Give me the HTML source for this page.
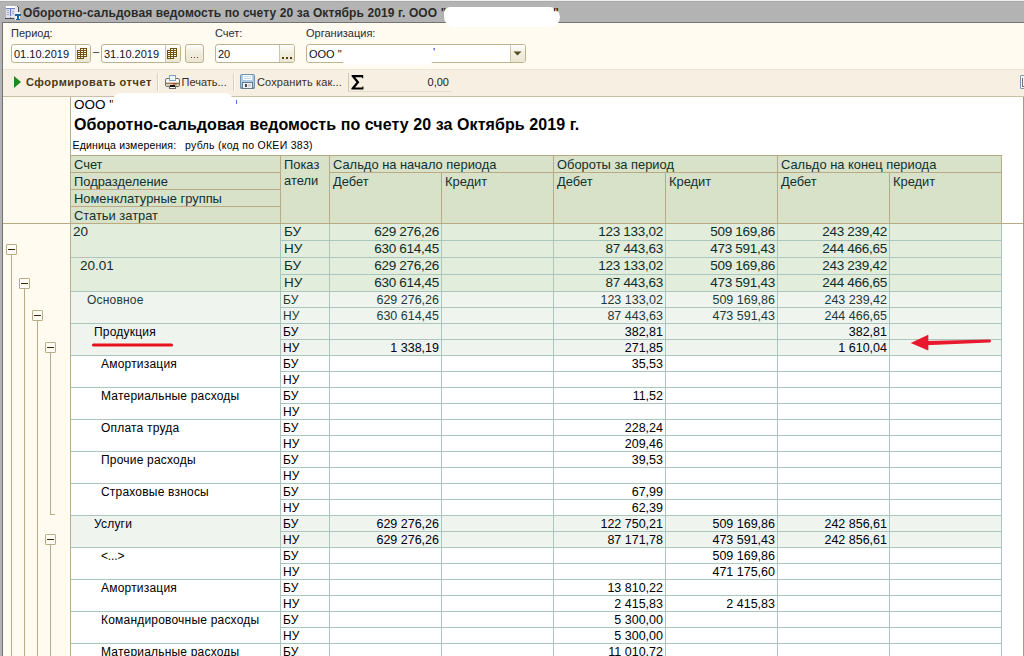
<!DOCTYPE html>
<html><head><meta charset="utf-8"><style>
html,body{margin:0;padding:0;width:1024px;height:656px;overflow:hidden;background:#fff}
body{position:relative;font-family:Liberation Sans,sans-serif}
div{position:absolute;box-sizing:content-box}
.t{white-space:pre}
</style></head><body>
<div style="left:0px;top:0px;width:1024px;height:656px;background:#b3b3b3"></div>
<div style="left:0px;top:0px;width:1024px;height:1px;background:#f0f0f0"></div>
<div style="left:0px;top:1px;width:1024px;height:1px;background:#a9a9a9"></div>
<div style="left:2px;top:22px;width:1022px;height:634px;background:#747474"></div>
<div style="left:3px;top:23px;width:1021px;height:633px;background:#fffbf0"></div>
<svg style="position:absolute;left:0;top:0" width="24" height="22" viewBox="0 0 24 22" shape-rendering="crispEdges">
<rect x="6" y="6" width="9" height="12" fill="#d9ddea"/>
<rect x="6" y="6" width="9" height="2" fill="#ffffff"/>
<rect x="6" y="8" width="9" height="1" fill="#6d80c4"/>
<rect x="10" y="8" width="1" height="10" fill="#6d80c4"/>
<rect x="7" y="10" width="2" height="1" fill="#a9b0c4"/>
<rect x="7" y="12" width="2" height="1" fill="#a9b0c4"/>
<rect x="7" y="14" width="2" height="1" fill="#a9b0c4"/>
<rect x="12" y="11" width="2" height="1" fill="#a9b0c4"/>
<rect x="12" y="13" width="2" height="1" fill="#a9b0c4"/>
<rect x="6" y="16" width="9" height="1" fill="#e6e8f0"/>
<rect x="5" y="18" width="9" height="1" fill="#4a4a4a"/>
<rect x="15" y="6" width="3" height="6" fill="#e8e8ee"/>
<rect x="18" y="7" width="1" height="5" fill="#505050"/>
<rect x="17" y="6" width="1" height="1" fill="#606060"/>
<rect x="15" y="12" width="5" height="8" fill="#f4f4f6"/>
<rect x="15" y="14" width="6" height="2" fill="#1a64a0"/>
<rect x="17" y="15" width="2" height="5" fill="#1a64a0"/>
<rect x="16" y="19" width="4" height="1" fill="#1a64a0"/>
</svg>
<div class="t" style="left:23px;top:5px;text-align:left;font:bold 12px/16px Liberation Sans,sans-serif;color:#2a2a2a;letter-spacing:0.115px">Оборотно-сальдовая ведомость по счету 20 за Октябрь 2019 г. ООО "</div>
<div style="left:444px;top:7px;width:116px;height:20px;background:#fff;border-radius:6px 10px 10px 10px"></div>
<div class="t" style="left:553px;top:5px;text-align:left;font:bold 12px/16px Liberation Sans,sans-serif;color:#2a2a2a">"</div>
<div class="t" style="left:11px;top:27px;text-align:left;font:11px/13px Liberation Sans,sans-serif;color:#2a2a38">Период:</div>
<div class="t" style="left:215px;top:27px;text-align:left;font:11px/13px Liberation Sans,sans-serif;color:#2a2a38">Счет:</div>
<div class="t" style="left:306px;top:27px;text-align:left;font:11px/13px Liberation Sans,sans-serif;color:#2a2a38">Организация:</div>
<div style="left:11px;top:44px;width:78px;height:17px;border:1px solid #bdb38f;border-radius:3px;background:#fff;overflow:hidden"><div class="t" style="left:2px;top:2.5px;font:11px/13px Liberation Sans,sans-serif;color:#101020">01.10.2019</div>
<div style="left:63px;top:0;width:15px;height:17px;border-left:1px solid #cfc6a6;background:linear-gradient(#ffffff,#f3f0e2 40%,#ebe6d2)"></div>
<svg style="position:absolute;left:65px;top:3px" width="11" height="11" viewBox="0 0 11 11" shape-rendering="crispEdges"><path d="M3 0 H10 V9 H7 V11 H0 V2 H3 Z" fill="#6e5012"/><g fill="#fffbea"><rect x="4" y="1" width="2" height="1"/><rect x="7" y="1" width="2" height="1"/><rect x="1" y="3" width="2" height="1"/><rect x="4" y="3" width="2" height="1"/><rect x="7" y="3" width="2" height="1"/><rect x="1" y="5" width="2" height="1"/><rect x="4" y="5" width="2" height="1"/><rect x="7" y="5" width="2" height="1"/><rect x="1" y="7" width="2" height="1"/><rect x="4" y="7" width="2" height="1"/><rect x="7" y="7" width="2" height="1"/><rect x="1" y="9" width="2" height="1"/><rect x="4" y="9" width="2" height="1"/></g></svg>
</div>
<div class="t" style="left:93px;top:45px;text-align:left;font:11px/13px Liberation Sans,sans-serif;color:#222">–</div>
<div style="left:101px;top:44px;width:78px;height:17px;border:1px solid #bdb38f;border-radius:3px;background:#fff;overflow:hidden"><div class="t" style="left:2px;top:2.5px;font:11px/13px Liberation Sans,sans-serif;color:#101020">31.10.2019</div>
<div style="left:63px;top:0;width:15px;height:17px;border-left:1px solid #cfc6a6;background:linear-gradient(#ffffff,#f3f0e2 40%,#ebe6d2)"></div>
<svg style="position:absolute;left:65px;top:3px" width="11" height="11" viewBox="0 0 11 11" shape-rendering="crispEdges"><path d="M3 0 H10 V9 H7 V11 H0 V2 H3 Z" fill="#6e5012"/><g fill="#fffbea"><rect x="4" y="1" width="2" height="1"/><rect x="7" y="1" width="2" height="1"/><rect x="1" y="3" width="2" height="1"/><rect x="4" y="3" width="2" height="1"/><rect x="7" y="3" width="2" height="1"/><rect x="1" y="5" width="2" height="1"/><rect x="4" y="5" width="2" height="1"/><rect x="7" y="5" width="2" height="1"/><rect x="1" y="7" width="2" height="1"/><rect x="4" y="7" width="2" height="1"/><rect x="7" y="7" width="2" height="1"/><rect x="1" y="9" width="2" height="1"/><rect x="4" y="9" width="2" height="1"/></g></svg>
</div>
<div style="left:185px;top:44px;width:17px;height:17px;border:1px solid #bdb38f;border-radius:3px;background:linear-gradient(#ffffff,#f3f0e2 35%,#ebe6d2)"><div style="left:5px;top:12px;width:1px;height:1px;background:#7a2840"></div><div style="left:8px;top:12px;width:1px;height:1px;background:#7a2840"></div><div style="left:11px;top:12px;width:1px;height:1px;background:#7a2840"></div></div>
<div style="left:215px;top:44px;width:78px;height:17px;border:1px solid #bdb38f;border-radius:3px;background:#fff;overflow:hidden"><div class="t" style="left:2px;top:2.5px;font:11px/13px Liberation Sans,sans-serif;color:#101020">20</div>
<div style="left:63px;top:0;width:15px;height:17px;border-left:1px solid #cfc6a6;background:linear-gradient(#ffffff,#f3f0e2 40%,#ebe6d2)"></div>
<div style="left:66px;top:12px;width:2px;height:2px;background:#5a3c08"></div>
<div style="left:70px;top:12px;width:2px;height:2px;background:#5a3c08"></div>
<div style="left:74px;top:12px;width:2px;height:2px;background:#5a3c08"></div>
</div>
<div style="left:306px;top:44px;width:218px;height:17px;border:1px solid #bdb38f;border-radius:3px;background:#fff;overflow:hidden"><div class="t" style="left:2px;top:2.5px;font:11px/13px Liberation Sans,sans-serif;color:#101020">ООО "</div>
<div style="left:203px;top:0;width:15px;height:17px;border-left:1px solid #cfc6a6;background:linear-gradient(#ffffff,#f3f0e2 40%,#ebe6d2)"></div>
<svg style="position:absolute;left:206px;top:6px" width="9" height="5" viewBox="0 0 9 5"><path d="M0.5 0.5 H8.5 L4.5 4.5 Z" fill="#5a4a20"/></svg>
</div>
<div class="t" style="left:433px;top:46px;text-align:left;font:11px/13px Liberation Sans,sans-serif;color:#302050">'</div>
<div style="left:341px;top:48px;width:93px;height:17px;background:#fff;border-radius:8px"></div>
<div style="left:3px;top:69px;width:1021px;height:27px;background:#f7efe2"></div>
<div style="left:3px;top:69px;width:1021px;height:1px;background:#ebe5d5"></div>
<div style="left:3px;top:96px;width:1021px;height:1px;background:#c9c0a6"></div>
<svg style="position:absolute;left:14px;top:76px" width="7" height="12" viewBox="0 0 7 12"><path d="M0 0 L7 6 L0 12 Z" fill="#1c8a1c"/></svg>
<div class="t" style="left:26px;top:74.5px;text-align:left;font:bold 11px/14px Liberation Sans,sans-serif;color:#4b3a12;letter-spacing:0.52px">Сформировать отчет</div>
<div style="left:157px;top:73px;width:1px;height:18px;background:#d9d1bb"></div>
<div style="left:158px;top:73px;width:1px;height:18px;background:#fffdf8"></div>
<svg style="position:absolute;left:164px;top:74px" width="17" height="16" viewBox="0 0 17 16">
<rect x="1.5" y="4.5" width="14" height="8" rx="1.5" fill="#fafafa" stroke="#6f6f6f"/>
<rect x="2" y="8" width="13" height="4" fill="#dcc8b4"/>
<rect x="2" y="9" width="13" height="1" fill="#a07a58"/>
<rect x="5.5" y="1.5" width="6" height="5" fill="#eef5fc" stroke="#7fa0c0"/>
<rect x="9" y="9" width="1.6" height="1.6" fill="#e02a1a"/>
<rect x="11" y="9" width="1.6" height="1.6" fill="#1a9a2a"/>
<rect x="5.5" y="12.5" width="6" height="2" fill="#fff" stroke="#666"/>
<rect x="6" y="11" width="5" height="2" fill="#111"/>
</svg>
<div class="t" style="left:181.5px;top:74.5px;text-align:left;font:11px/14px Liberation Sans,sans-serif;color:#3a3020">Печать...</div>
<div style="left:233px;top:73px;width:1px;height:18px;background:#d9d1bb"></div>
<div style="left:234px;top:73px;width:1px;height:18px;background:#fffdf8"></div>
<svg style="position:absolute;left:240px;top:74px" width="15" height="15" viewBox="0 0 15 15">
<rect x="0.5" y="0.5" width="14" height="14" rx="1.2" fill="#aecbe6" stroke="#7090ae"/>
<rect x="0.5" y="13.5" width="14" height="1" fill="#5f7386"/>
<rect x="3" y="1" width="9" height="5" fill="#fbfdff"/>
<rect x="4" y="2.2" width="7" height="0.9" fill="#b8d6e4"/>
<rect x="4" y="4" width="7" height="0.9" fill="#b8d6e4"/>
<rect x="2.5" y="8.5" width="10" height="6" fill="#eef0f2" stroke="#6a7c8c"/>
<rect x="5" y="10" width="2" height="3" fill="#3c5064"/>
<rect x="8" y="10" width="3" height="3" fill="#cfd4d8"/>
</svg>
<div class="t" style="left:257px;top:74.5px;text-align:left;font:11px/14px Liberation Sans,sans-serif;color:#3a3020;letter-spacing:0.13px">Сохранить как...</div>
<div style="left:348px;top:73px;width:104px;height:19px;border-left:1px solid #d2c9b3;border-bottom:1px solid #e2dccb;box-sizing:border-box;background:#f7efe2"></div>
<svg style="position:absolute;left:351px;top:75px" width="13" height="15" viewBox="0 0 13 15"><path d="M0.6 0 H12.2 V3.2 H11 V2.2 H4.2 L8.4 7.3 L4 12.6 H11.2 V11.4 H12.4 V14.4 H0.4 V13.2 L5.4 7.3 L0.6 1.3 Z" fill="#000"/></svg>
<div class="t" style="left:400px;top:75px;width:49px;text-align:right;font:11px/14px Liberation Sans,sans-serif;color:#1a1a1a">0,00</div>
<div style="left:3px;top:97px;width:1020px;height:559px;background:#fffbf0"></div>
<div style="left:70px;top:97px;width:1px;height:559px;background:#b7ad88"></div>
<div style="left:71px;top:97px;width:952px;height:559px;background:#fff"></div>
<div style="left:1023px;top:97px;width:1px;height:559px;background:#a39b7d"></div>
<div style="left:1020px;top:75px;width:6px;height:12px;border:1px solid #7d98ae;border-radius:1px;background:linear-gradient(90deg,#fff,#d8ecfa)"></div>
<div style="left:1022px;top:78px;width:1px;height:8px;background:#6e6e6e"></div>
<div style="left:1022px;top:86px;width:2px;height:1px;background:#6e6e6e"></div>
<div class="t" style="left:74px;top:97px;text-align:left;font:13.5px/16px Liberation Sans,sans-serif;color:#000">ООО "</div>
<div style="left:113px;top:93px;width:120px;height:24px;background:#fff;border-radius:8px"></div>
<div style="left:236px;top:100px;width:1px;height:4px;background:#4a7ad0"></div>
<div class="t" style="left:74px;top:115px;text-align:left;font:bold 16px/19px Liberation Sans,sans-serif;color:#000;letter-spacing:0.075px">Оборотно-сальдовая ведомость по счету 20 за Октябрь 2019 г.</div>
<div class="t" style="left:72.6px;top:139px;text-align:left;font:10.5px/13px Liberation Sans,sans-serif;color:#000;letter-spacing:0.14px">Единица измерения:</div>
<div class="t" style="left:185px;top:139px;text-align:left;font:10.5px/13px Liberation Sans,sans-serif;color:#000;letter-spacing:0.29px">рубль (код по ОКЕИ 383)</div>
<div style="left:71px;top:156px;width:930px;height:67px;background:#d8e2c9"></div>
<div style="left:70px;top:155px;width:932px;height:1px;background:#b9aa84"></div>
<div style="left:3px;top:223px;width:1020px;height:1px;background:#b9aa84"></div>
<div style="left:70px;top:172px;width:210px;height:1px;background:#b9aa84"></div>
<div style="left:70px;top:189px;width:210px;height:1px;background:#b9aa84"></div>
<div style="left:70px;top:206px;width:210px;height:1px;background:#b9aa84"></div>
<div style="left:329px;top:172px;width:672px;height:1px;background:#b9aa84"></div>
<div style="left:70px;top:155px;width:1px;height:68px;background:#b9aa84"></div>
<div style="left:280px;top:155px;width:1px;height:68px;background:#b9aa84"></div>
<div style="left:329px;top:155px;width:1px;height:68px;background:#b9aa84"></div>
<div style="left:553px;top:155px;width:1px;height:68px;background:#b9aa84"></div>
<div style="left:777px;top:155px;width:1px;height:68px;background:#b9aa84"></div>
<div style="left:1001px;top:155px;width:1px;height:68px;background:#b9aa84"></div>
<div style="left:441px;top:172px;width:1px;height:51px;background:#b9aa84"></div>
<div style="left:665px;top:172px;width:1px;height:51px;background:#b9aa84"></div>
<div style="left:889px;top:172px;width:1px;height:51px;background:#b9aa84"></div>
<div class="t" style="left:74px;top:157px;text-align:left;font:12.9px/15px Liberation Sans,sans-serif;color:#10302e">Счет</div>
<div class="t" style="left:74px;top:174px;text-align:left;font:12.9px/15px Liberation Sans,sans-serif;color:#10302e">Подразделение</div>
<div class="t" style="left:74px;top:191px;text-align:left;font:12.9px/15px Liberation Sans,sans-serif;color:#10302e">Номенклатурные группы</div>
<div class="t" style="left:74px;top:208px;text-align:left;font:12.9px/15px Liberation Sans,sans-serif;color:#10302e">Статьи затрат</div>
<div class="t" style="left:284px;top:157px;text-align:left;font:12.9px/15px Liberation Sans,sans-serif;color:#10302e">Показ</div>
<div class="t" style="left:284px;top:173px;text-align:left;font:12.9px/15px Liberation Sans,sans-serif;color:#10302e">атели</div>
<div class="t" style="left:333px;top:157px;text-align:left;font:12.9px/15px Liberation Sans,sans-serif;color:#10302e">Сальдо на начало периода</div>
<div class="t" style="left:557px;top:157px;text-align:left;font:12.9px/15px Liberation Sans,sans-serif;color:#10302e">Обороты за период</div>
<div class="t" style="left:781px;top:157px;text-align:left;font:12.9px/15px Liberation Sans,sans-serif;color:#10302e">Сальдо на конец периода</div>
<div class="t" style="left:333px;top:174px;text-align:left;font:12.9px/15px Liberation Sans,sans-serif;color:#10302e">Дебет</div>
<div class="t" style="left:445px;top:174px;text-align:left;font:12.9px/15px Liberation Sans,sans-serif;color:#10302e">Кредит</div>
<div class="t" style="left:557px;top:174px;text-align:left;font:12.9px/15px Liberation Sans,sans-serif;color:#10302e">Дебет</div>
<div class="t" style="left:669px;top:174px;text-align:left;font:12.9px/15px Liberation Sans,sans-serif;color:#10302e">Кредит</div>
<div class="t" style="left:781px;top:174px;text-align:left;font:12.9px/15px Liberation Sans,sans-serif;color:#10302e">Дебет</div>
<div class="t" style="left:893px;top:174px;text-align:left;font:12.9px/15px Liberation Sans,sans-serif;color:#10302e">Кредит</div>
<div style="left:71px;top:224px;width:930px;height:33px;background:#e3eddb"></div>
<div style="left:71px;top:240px;width:930px;height:1px;background:#a9c6bf"></div>
<div style="left:71px;top:257px;width:930px;height:1px;background:#a9c6bf"></div>
<div style="left:71px;top:240px;width:209px;height:1px;background:#e3eddb"></div>
<div class="t" style="left:73px;top:223px;text-align:left;font:13.5px/17px Liberation Sans,sans-serif;color:#0e2c2a">20</div>
<div class="t" style="left:284px;top:223px;text-align:left;font:13.5px/17px Liberation Sans,sans-serif;color:#0e2c2a">БУ</div>
<div class="t" style="left:284px;top:240px;text-align:left;font:13.5px/17px Liberation Sans,sans-serif;color:#0e2c2a">НУ</div>
<div class="t" style="left:329px;top:223px;width:110px;text-align:right;font:13.5px/17px Liberation Sans,sans-serif;color:#0e2c2a;letter-spacing:-0.28px">629 276,26</div>
<div class="t" style="left:329px;top:240px;width:110px;text-align:right;font:13.5px/17px Liberation Sans,sans-serif;color:#0e2c2a;letter-spacing:-0.28px">630 614,45</div>
<div class="t" style="left:553px;top:223px;width:110px;text-align:right;font:13.5px/17px Liberation Sans,sans-serif;color:#0e2c2a;letter-spacing:-0.28px">123 133,02</div>
<div class="t" style="left:553px;top:240px;width:110px;text-align:right;font:13.5px/17px Liberation Sans,sans-serif;color:#0e2c2a;letter-spacing:-0.28px">87 443,63</div>
<div class="t" style="left:665px;top:223px;width:110px;text-align:right;font:13.5px/17px Liberation Sans,sans-serif;color:#0e2c2a;letter-spacing:-0.28px">509 169,86</div>
<div class="t" style="left:665px;top:240px;width:110px;text-align:right;font:13.5px/17px Liberation Sans,sans-serif;color:#0e2c2a;letter-spacing:-0.28px">473 591,43</div>
<div class="t" style="left:777px;top:223px;width:110px;text-align:right;font:13.5px/17px Liberation Sans,sans-serif;color:#0e2c2a;letter-spacing:-0.28px">243 239,42</div>
<div class="t" style="left:777px;top:240px;width:110px;text-align:right;font:13.5px/17px Liberation Sans,sans-serif;color:#0e2c2a;letter-spacing:-0.28px">244 466,65</div>
<div style="left:71px;top:258px;width:930px;height:33px;background:#e3eddb"></div>
<div style="left:71px;top:274px;width:930px;height:1px;background:#a9c6bf"></div>
<div style="left:71px;top:291px;width:930px;height:1px;background:#a9c6bf"></div>
<div style="left:71px;top:274px;width:209px;height:1px;background:#e3eddb"></div>
<div class="t" style="left:80px;top:257px;text-align:left;font:13.5px/17px Liberation Sans,sans-serif;color:#0e2c2a">20.01</div>
<div class="t" style="left:284px;top:257px;text-align:left;font:13.5px/17px Liberation Sans,sans-serif;color:#0e2c2a">БУ</div>
<div class="t" style="left:284px;top:274px;text-align:left;font:13.5px/17px Liberation Sans,sans-serif;color:#0e2c2a">НУ</div>
<div class="t" style="left:329px;top:257px;width:110px;text-align:right;font:13.5px/17px Liberation Sans,sans-serif;color:#0e2c2a;letter-spacing:-0.28px">629 276,26</div>
<div class="t" style="left:329px;top:274px;width:110px;text-align:right;font:13.5px/17px Liberation Sans,sans-serif;color:#0e2c2a;letter-spacing:-0.28px">630 614,45</div>
<div class="t" style="left:553px;top:257px;width:110px;text-align:right;font:13.5px/17px Liberation Sans,sans-serif;color:#0e2c2a;letter-spacing:-0.28px">123 133,02</div>
<div class="t" style="left:553px;top:274px;width:110px;text-align:right;font:13.5px/17px Liberation Sans,sans-serif;color:#0e2c2a;letter-spacing:-0.28px">87 443,63</div>
<div class="t" style="left:665px;top:257px;width:110px;text-align:right;font:13.5px/17px Liberation Sans,sans-serif;color:#0e2c2a;letter-spacing:-0.28px">509 169,86</div>
<div class="t" style="left:665px;top:274px;width:110px;text-align:right;font:13.5px/17px Liberation Sans,sans-serif;color:#0e2c2a;letter-spacing:-0.28px">473 591,43</div>
<div class="t" style="left:777px;top:257px;width:110px;text-align:right;font:13.5px/17px Liberation Sans,sans-serif;color:#0e2c2a;letter-spacing:-0.28px">243 239,42</div>
<div class="t" style="left:777px;top:274px;width:110px;text-align:right;font:13.5px/17px Liberation Sans,sans-serif;color:#0e2c2a;letter-spacing:-0.28px">244 466,65</div>
<div style="left:71px;top:292px;width:930px;height:31px;background:#eff4ee"></div>
<div style="left:71px;top:307px;width:930px;height:1px;background:#a9c6bf"></div>
<div style="left:71px;top:323px;width:930px;height:1px;background:#a9c6bf"></div>
<div style="left:71px;top:307px;width:209px;height:1px;background:#eff4ee"></div>
<div class="t" style="left:87px;top:292px;text-align:left;font:12px/16px Liberation Sans,sans-serif;color:#1e3a38;letter-spacing:0.2px">Основное</div>
<div class="t" style="left:283px;top:292px;text-align:left;font:12px/16px Liberation Sans,sans-serif;color:#1e3a38;letter-spacing:0.2px">БУ</div>
<div class="t" style="left:283px;top:308px;text-align:left;font:12px/16px Liberation Sans,sans-serif;color:#1e3a38;letter-spacing:0.2px">НУ</div>
<div class="t" style="left:329px;top:292px;width:110px;text-align:right;font:12.5px/16px Liberation Sans,sans-serif;color:#1e3a38">629 276,26</div>
<div class="t" style="left:329px;top:308px;width:110px;text-align:right;font:12.5px/16px Liberation Sans,sans-serif;color:#1e3a38">630 614,45</div>
<div class="t" style="left:553px;top:292px;width:110px;text-align:right;font:12.5px/16px Liberation Sans,sans-serif;color:#1e3a38">123 133,02</div>
<div class="t" style="left:553px;top:308px;width:110px;text-align:right;font:12.5px/16px Liberation Sans,sans-serif;color:#1e3a38">87 443,63</div>
<div class="t" style="left:665px;top:292px;width:110px;text-align:right;font:12.5px/16px Liberation Sans,sans-serif;color:#1e3a38">509 169,86</div>
<div class="t" style="left:665px;top:308px;width:110px;text-align:right;font:12.5px/16px Liberation Sans,sans-serif;color:#1e3a38">473 591,43</div>
<div class="t" style="left:777px;top:292px;width:110px;text-align:right;font:12.5px/16px Liberation Sans,sans-serif;color:#1e3a38">243 239,42</div>
<div class="t" style="left:777px;top:308px;width:110px;text-align:right;font:12.5px/16px Liberation Sans,sans-serif;color:#1e3a38">244 466,65</div>
<div style="left:71px;top:324px;width:930px;height:31px;background:#eff4ee"></div>
<div style="left:71px;top:339px;width:930px;height:1px;background:#a9c6bf"></div>
<div style="left:71px;top:355px;width:930px;height:1px;background:#a9c6bf"></div>
<div style="left:71px;top:339px;width:209px;height:1px;background:#eff4ee"></div>
<div class="t" style="left:94px;top:324px;text-align:left;font:12px/16px Liberation Sans,sans-serif;color:#000010;letter-spacing:0.2px">Продукция</div>
<div class="t" style="left:283px;top:324px;text-align:left;font:12px/16px Liberation Sans,sans-serif;color:#000010;letter-spacing:0.2px">БУ</div>
<div class="t" style="left:283px;top:340px;text-align:left;font:12px/16px Liberation Sans,sans-serif;color:#000010;letter-spacing:0.2px">НУ</div>
<div class="t" style="left:329px;top:340px;width:110px;text-align:right;font:12.5px/16px Liberation Sans,sans-serif;color:#000010">1 338,19</div>
<div class="t" style="left:553px;top:324px;width:110px;text-align:right;font:12.5px/16px Liberation Sans,sans-serif;color:#000010">382,81</div>
<div class="t" style="left:553px;top:340px;width:110px;text-align:right;font:12.5px/16px Liberation Sans,sans-serif;color:#000010">271,85</div>
<div class="t" style="left:777px;top:324px;width:110px;text-align:right;font:12.5px/16px Liberation Sans,sans-serif;color:#000010">382,81</div>
<div class="t" style="left:777px;top:340px;width:110px;text-align:right;font:12.5px/16px Liberation Sans,sans-serif;color:#000010">1 610,04</div>
<div style="left:71px;top:356px;width:930px;height:31px;background:#ffffff"></div>
<div style="left:71px;top:371px;width:930px;height:1px;background:#a9c6bf"></div>
<div style="left:71px;top:387px;width:930px;height:1px;background:#a9c6bf"></div>
<div style="left:71px;top:371px;width:209px;height:1px;background:#ffffff"></div>
<div class="t" style="left:101px;top:356px;text-align:left;font:12px/16px Liberation Sans,sans-serif;color:#000;letter-spacing:0.2px">Амортизация</div>
<div class="t" style="left:283px;top:356px;text-align:left;font:12px/16px Liberation Sans,sans-serif;color:#000;letter-spacing:0.2px">БУ</div>
<div class="t" style="left:283px;top:372px;text-align:left;font:12px/16px Liberation Sans,sans-serif;color:#000;letter-spacing:0.2px">НУ</div>
<div class="t" style="left:553px;top:356px;width:110px;text-align:right;font:12.5px/16px Liberation Sans,sans-serif;color:#000">35,53</div>
<div style="left:71px;top:388px;width:930px;height:31px;background:#ffffff"></div>
<div style="left:71px;top:403px;width:930px;height:1px;background:#a9c6bf"></div>
<div style="left:71px;top:419px;width:930px;height:1px;background:#a9c6bf"></div>
<div style="left:71px;top:403px;width:209px;height:1px;background:#ffffff"></div>
<div class="t" style="left:101px;top:388px;text-align:left;font:12px/16px Liberation Sans,sans-serif;color:#000;letter-spacing:0.2px">Материальные расходы</div>
<div class="t" style="left:283px;top:388px;text-align:left;font:12px/16px Liberation Sans,sans-serif;color:#000;letter-spacing:0.2px">БУ</div>
<div class="t" style="left:283px;top:404px;text-align:left;font:12px/16px Liberation Sans,sans-serif;color:#000;letter-spacing:0.2px">НУ</div>
<div class="t" style="left:553px;top:388px;width:110px;text-align:right;font:12.5px/16px Liberation Sans,sans-serif;color:#000">11,52</div>
<div style="left:71px;top:420px;width:930px;height:31px;background:#ffffff"></div>
<div style="left:71px;top:435px;width:930px;height:1px;background:#a9c6bf"></div>
<div style="left:71px;top:451px;width:930px;height:1px;background:#a9c6bf"></div>
<div style="left:71px;top:435px;width:209px;height:1px;background:#ffffff"></div>
<div class="t" style="left:101px;top:420px;text-align:left;font:12px/16px Liberation Sans,sans-serif;color:#000;letter-spacing:0.2px">Оплата труда</div>
<div class="t" style="left:283px;top:420px;text-align:left;font:12px/16px Liberation Sans,sans-serif;color:#000;letter-spacing:0.2px">БУ</div>
<div class="t" style="left:283px;top:436px;text-align:left;font:12px/16px Liberation Sans,sans-serif;color:#000;letter-spacing:0.2px">НУ</div>
<div class="t" style="left:553px;top:420px;width:110px;text-align:right;font:12.5px/16px Liberation Sans,sans-serif;color:#000">228,24</div>
<div class="t" style="left:553px;top:436px;width:110px;text-align:right;font:12.5px/16px Liberation Sans,sans-serif;color:#000">209,46</div>
<div style="left:71px;top:452px;width:930px;height:31px;background:#ffffff"></div>
<div style="left:71px;top:467px;width:930px;height:1px;background:#a9c6bf"></div>
<div style="left:71px;top:483px;width:930px;height:1px;background:#a9c6bf"></div>
<div style="left:71px;top:467px;width:209px;height:1px;background:#ffffff"></div>
<div class="t" style="left:101px;top:452px;text-align:left;font:12px/16px Liberation Sans,sans-serif;color:#000;letter-spacing:0.2px">Прочие расходы</div>
<div class="t" style="left:283px;top:452px;text-align:left;font:12px/16px Liberation Sans,sans-serif;color:#000;letter-spacing:0.2px">БУ</div>
<div class="t" style="left:283px;top:468px;text-align:left;font:12px/16px Liberation Sans,sans-serif;color:#000;letter-spacing:0.2px">НУ</div>
<div class="t" style="left:553px;top:452px;width:110px;text-align:right;font:12.5px/16px Liberation Sans,sans-serif;color:#000">39,53</div>
<div style="left:71px;top:484px;width:930px;height:31px;background:#ffffff"></div>
<div style="left:71px;top:499px;width:930px;height:1px;background:#a9c6bf"></div>
<div style="left:71px;top:515px;width:930px;height:1px;background:#a9c6bf"></div>
<div style="left:71px;top:499px;width:209px;height:1px;background:#ffffff"></div>
<div class="t" style="left:101px;top:484px;text-align:left;font:12px/16px Liberation Sans,sans-serif;color:#000;letter-spacing:0.2px">Страховые взносы</div>
<div class="t" style="left:283px;top:484px;text-align:left;font:12px/16px Liberation Sans,sans-serif;color:#000;letter-spacing:0.2px">БУ</div>
<div class="t" style="left:283px;top:500px;text-align:left;font:12px/16px Liberation Sans,sans-serif;color:#000;letter-spacing:0.2px">НУ</div>
<div class="t" style="left:553px;top:484px;width:110px;text-align:right;font:12.5px/16px Liberation Sans,sans-serif;color:#000">67,99</div>
<div class="t" style="left:553px;top:500px;width:110px;text-align:right;font:12.5px/16px Liberation Sans,sans-serif;color:#000">62,39</div>
<div style="left:71px;top:516px;width:930px;height:31px;background:#eff4ee"></div>
<div style="left:71px;top:531px;width:930px;height:1px;background:#a9c6bf"></div>
<div style="left:71px;top:547px;width:930px;height:1px;background:#a9c6bf"></div>
<div style="left:71px;top:531px;width:209px;height:1px;background:#eff4ee"></div>
<div class="t" style="left:94px;top:516px;text-align:left;font:12px/16px Liberation Sans,sans-serif;color:#000010;letter-spacing:0.2px">Услуги</div>
<div class="t" style="left:283px;top:516px;text-align:left;font:12px/16px Liberation Sans,sans-serif;color:#000010;letter-spacing:0.2px">БУ</div>
<div class="t" style="left:283px;top:532px;text-align:left;font:12px/16px Liberation Sans,sans-serif;color:#000010;letter-spacing:0.2px">НУ</div>
<div class="t" style="left:329px;top:516px;width:110px;text-align:right;font:12.5px/16px Liberation Sans,sans-serif;color:#000010">629 276,26</div>
<div class="t" style="left:329px;top:532px;width:110px;text-align:right;font:12.5px/16px Liberation Sans,sans-serif;color:#000010">629 276,26</div>
<div class="t" style="left:553px;top:516px;width:110px;text-align:right;font:12.5px/16px Liberation Sans,sans-serif;color:#000010">122 750,21</div>
<div class="t" style="left:553px;top:532px;width:110px;text-align:right;font:12.5px/16px Liberation Sans,sans-serif;color:#000010">87 171,78</div>
<div class="t" style="left:665px;top:516px;width:110px;text-align:right;font:12.5px/16px Liberation Sans,sans-serif;color:#000010">509 169,86</div>
<div class="t" style="left:665px;top:532px;width:110px;text-align:right;font:12.5px/16px Liberation Sans,sans-serif;color:#000010">473 591,43</div>
<div class="t" style="left:777px;top:516px;width:110px;text-align:right;font:12.5px/16px Liberation Sans,sans-serif;color:#000010">242 856,61</div>
<div class="t" style="left:777px;top:532px;width:110px;text-align:right;font:12.5px/16px Liberation Sans,sans-serif;color:#000010">242 856,61</div>
<div style="left:71px;top:548px;width:930px;height:31px;background:#ffffff"></div>
<div style="left:71px;top:563px;width:930px;height:1px;background:#a9c6bf"></div>
<div style="left:71px;top:579px;width:930px;height:1px;background:#a9c6bf"></div>
<div style="left:71px;top:563px;width:209px;height:1px;background:#ffffff"></div>
<div class="t" style="left:101px;top:548px;text-align:left;font:12px/16px Liberation Sans,sans-serif;color:#000;letter-spacing:0.2px;letter-spacing:-0.15px">&lt;...&gt;</div>
<div class="t" style="left:283px;top:548px;text-align:left;font:12px/16px Liberation Sans,sans-serif;color:#000;letter-spacing:0.2px">БУ</div>
<div class="t" style="left:283px;top:564px;text-align:left;font:12px/16px Liberation Sans,sans-serif;color:#000;letter-spacing:0.2px">НУ</div>
<div class="t" style="left:665px;top:548px;width:110px;text-align:right;font:12.5px/16px Liberation Sans,sans-serif;color:#000">509 169,86</div>
<div class="t" style="left:665px;top:564px;width:110px;text-align:right;font:12.5px/16px Liberation Sans,sans-serif;color:#000">471 175,60</div>
<div style="left:71px;top:580px;width:930px;height:31px;background:#ffffff"></div>
<div style="left:71px;top:595px;width:930px;height:1px;background:#a9c6bf"></div>
<div style="left:71px;top:611px;width:930px;height:1px;background:#a9c6bf"></div>
<div style="left:71px;top:595px;width:209px;height:1px;background:#ffffff"></div>
<div class="t" style="left:101px;top:580px;text-align:left;font:12px/16px Liberation Sans,sans-serif;color:#000;letter-spacing:0.2px">Амортизация</div>
<div class="t" style="left:283px;top:580px;text-align:left;font:12px/16px Liberation Sans,sans-serif;color:#000;letter-spacing:0.2px">БУ</div>
<div class="t" style="left:283px;top:596px;text-align:left;font:12px/16px Liberation Sans,sans-serif;color:#000;letter-spacing:0.2px">НУ</div>
<div class="t" style="left:553px;top:580px;width:110px;text-align:right;font:12.5px/16px Liberation Sans,sans-serif;color:#000">13 810,22</div>
<div class="t" style="left:553px;top:596px;width:110px;text-align:right;font:12.5px/16px Liberation Sans,sans-serif;color:#000">2 415,83</div>
<div class="t" style="left:665px;top:596px;width:110px;text-align:right;font:12.5px/16px Liberation Sans,sans-serif;color:#000">2 415,83</div>
<div style="left:71px;top:612px;width:930px;height:31px;background:#ffffff"></div>
<div style="left:71px;top:627px;width:930px;height:1px;background:#a9c6bf"></div>
<div style="left:71px;top:643px;width:930px;height:1px;background:#a9c6bf"></div>
<div style="left:71px;top:627px;width:209px;height:1px;background:#ffffff"></div>
<div class="t" style="left:101px;top:612px;text-align:left;font:12px/16px Liberation Sans,sans-serif;color:#000;letter-spacing:0.2px">Командировочные расходы</div>
<div class="t" style="left:283px;top:612px;text-align:left;font:12px/16px Liberation Sans,sans-serif;color:#000;letter-spacing:0.2px">БУ</div>
<div class="t" style="left:283px;top:628px;text-align:left;font:12px/16px Liberation Sans,sans-serif;color:#000;letter-spacing:0.2px">НУ</div>
<div class="t" style="left:553px;top:612px;width:110px;text-align:right;font:12.5px/16px Liberation Sans,sans-serif;color:#000">5 300,00</div>
<div class="t" style="left:553px;top:628px;width:110px;text-align:right;font:12.5px/16px Liberation Sans,sans-serif;color:#000">5 300,00</div>
<div style="left:71px;top:644px;width:930px;height:31px;background:#ffffff"></div>
<div style="left:71px;top:659px;width:930px;height:1px;background:#a9c6bf"></div>
<div style="left:71px;top:675px;width:930px;height:1px;background:#a9c6bf"></div>
<div style="left:71px;top:659px;width:209px;height:1px;background:#ffffff"></div>
<div class="t" style="left:101px;top:644px;text-align:left;font:12px/16px Liberation Sans,sans-serif;color:#000;letter-spacing:0.2px">Материальные расходы</div>
<div class="t" style="left:283px;top:644px;text-align:left;font:12px/16px Liberation Sans,sans-serif;color:#000;letter-spacing:0.2px">БУ</div>
<div class="t" style="left:283px;top:660px;text-align:left;font:12px/16px Liberation Sans,sans-serif;color:#000;letter-spacing:0.2px">НУ</div>
<div class="t" style="left:553px;top:644px;width:110px;text-align:right;font:12.5px/16px Liberation Sans,sans-serif;color:#000">11 010,72</div>
<div style="left:280px;top:224px;width:1px;height:432px;background:#a9c6bf"></div>
<div style="left:329px;top:224px;width:1px;height:432px;background:#a9c6bf"></div>
<div style="left:441px;top:224px;width:1px;height:432px;background:#a9c6bf"></div>
<div style="left:553px;top:224px;width:1px;height:432px;background:#a9c6bf"></div>
<div style="left:665px;top:224px;width:1px;height:432px;background:#a9c6bf"></div>
<div style="left:777px;top:224px;width:1px;height:432px;background:#a9c6bf"></div>
<div style="left:889px;top:224px;width:1px;height:432px;background:#a9c6bf"></div>
<div style="left:1001px;top:224px;width:1px;height:432px;background:#a9c6bf"></div>
<div style="left:11px;top:254px;width:1px;height:402px;background:#b8ad86"></div>
<div style="left:24px;top:288px;width:1px;height:368px;background:#b8ad86"></div>
<div style="left:37px;top:320px;width:1px;height:336px;background:#b8ad86"></div>
<div style="left:50px;top:352px;width:1px;height:163px;background:#b8ad86"></div>
<div style="left:50px;top:514px;width:5px;height:1px;background:#b8ad86"></div>
<div style="left:50px;top:544px;width:1px;height:112px;background:#b8ad86"></div>
<div style="left:6px;top:244px;width:9px;height:9px;border:1px solid #b8ad86;border-radius:1px;background:#fffdf6"><div style="left:1px;top:4px;width:7px;height:1px;background:#3a2a08"></div></div>
<div style="left:19px;top:278px;width:9px;height:9px;border:1px solid #b8ad86;border-radius:1px;background:#fffdf6"><div style="left:1px;top:4px;width:7px;height:1px;background:#3a2a08"></div></div>
<div style="left:32px;top:310px;width:9px;height:9px;border:1px solid #b8ad86;border-radius:1px;background:#fffdf6"><div style="left:1px;top:4px;width:7px;height:1px;background:#3a2a08"></div></div>
<div style="left:45px;top:342px;width:9px;height:9px;border:1px solid #b8ad86;border-radius:1px;background:#fffdf6"><div style="left:1px;top:4px;width:7px;height:1px;background:#3a2a08"></div></div>
<div style="left:45px;top:534px;width:9px;height:9px;border:1px solid #b8ad86;border-radius:1px;background:#fffdf6"><div style="left:1px;top:4px;width:7px;height:1px;background:#3a2a08"></div></div>
<svg style="position:absolute;left:84px;top:336px" width="100" height="20" viewBox="0 0 100 20"><path d="M9.5 9 L87.5 9" stroke="#e8121e" stroke-width="3.2" stroke-linecap="round" fill="none"/></svg>
<svg style="position:absolute;left:900px;top:325px" width="100" height="30" viewBox="0 0 100 30"><path d="M26 20.2 L89.5 17.4 A1.5 1.5 0 0 0 89.5 14.4 L26 16 Z" fill="#e8192c"/><path d="M10.7 18 L28.3 9.8 L28.3 25.4 Z" fill="#e8192c"/></svg>
</body></html>
